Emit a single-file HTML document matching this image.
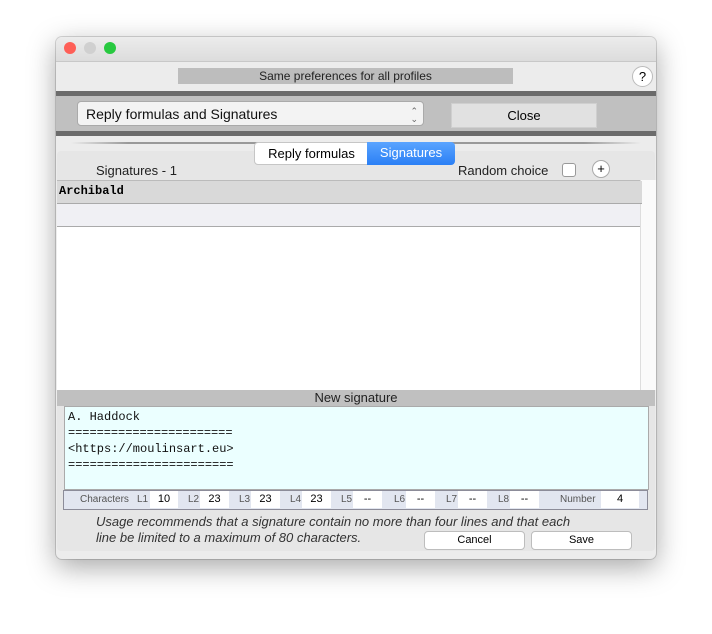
<!DOCTYPE html>
<html><head><style>
body{margin:0;width:712px;height:634px;background:#fff;font-family:"Liberation Sans",sans-serif;position:relative;overflow:hidden}
.a{position:absolute}
.win{left:56px;top:37px;width:600px;height:522px;background:#ececec;border-radius:6px;box-shadow:0 8px 28px rgba(0,0,0,.35),0 0 0 1px rgba(0,0,0,.15);overflow:hidden}
.tl{width:12px;height:12px;border-radius:50%;top:5px}
.mono{font-family:"Liberation Mono",monospace}
.inp{background:#fff;height:17px;font-size:11px;text-align:center;line-height:17px}
.lab{font-size:10px;color:#555}
.btn{background:#fff;border:1px solid #bdbdbd;border-radius:4px;font-size:11px;text-align:center;line-height:17px;height:17px}
</style></head><body>
<div class="a win">
 <div class="a" style="left:0;top:0;width:600px;height:24px;background:linear-gradient(#ececec,#dcdcdc);border-bottom:1px solid #c8c8c8"></div>
 <div class="a tl" style="left:8px;background:#fe5f57"></div>
 <div class="a tl" style="left:28px;background:#d0d0d0"></div>
 <div class="a tl" style="left:48px;background:#28c940"></div>
 <div class="a" style="left:122px;top:31px;width:335px;height:16px;background:#bdbdbd;font-size:12px;text-align:center;line-height:16px;color:#222">Same preferences for all profiles</div>
 <div class="a" style="left:576px;top:29px;width:19px;height:19px;border-radius:50%;background:#fff;border:1px solid #bbb;font-size:13px;text-align:center;line-height:19px">?</div>
 <div class="a" style="left:0;top:54px;width:600px;height:5px;background:#6b6b6b"></div>
 <div class="a" style="left:0;top:59px;width:600px;height:35px;background:#c0c0c0"></div>
 <div class="a" style="left:0;top:94px;width:600px;height:5px;background:#6b6b6b"></div>
 <div class="a" style="left:21px;top:64px;width:347px;height:25px;background:#f3f3f3;border-radius:4px;border:0.5px solid #aaa;font-size:14px;line-height:25px;padding-left:8px;box-sizing:border-box;color:#111">Reply formulas and Signatures<span class="a" style="right:5px;top:0;font-size:9px;color:#666;line-height:8px;padding-top:5px;text-align:center">⌃<br>⌄</span></div>
 <div class="a" style="left:395px;top:66px;width:144px;height:23px;background:#e1e1e1;border:1px solid #cfcfcf;font-size:13px;text-align:center;line-height:23px">Close</div>
 <div class="a" style="left:15px;top:105px;width:570px;height:2px;background:linear-gradient(90deg,transparent,#999 10%,#999 90%,transparent)"></div>
 <div class="a" style="left:1px;top:114px;width:598px;height:400px;background:#e6e6e6;border-radius:4px"></div>
 <div class="a" style="left:198px;top:105px;width:113px;height:21px;background:#fff;border:1px solid #c6c6c6;border-radius:4px 0 0 4px;font-size:13px;text-align:center;line-height:21px">Reply formulas</div>
 <div class="a" style="left:311px;top:105px;width:88px;height:23px;background:linear-gradient(#5aa4ff,#2a7ff5);border-radius:0 4px 4px 0;color:#fff;font-size:13px;text-align:center;line-height:22px">Signatures</div>
 <div class="a" style="left:40px;top:126px;font-size:13px;color:#222">Signatures - 1</div>
 <div class="a" style="left:402px;top:126px;font-size:13px;color:#222">Random choice</div>
 <div class="a" style="left:506px;top:126px;width:12px;height:12px;background:#fff;border:1px solid #999;border-radius:3px"></div>
 <div class="a" style="left:536px;top:123px;width:16px;height:16px;border-radius:50%;background:#fff;border:1px solid #aaa;font-size:13px;text-align:center;line-height:16px">+</div>
 <div class="a" style="left:1px;top:143px;width:583px;height:210px;background:#fff;border-top:1px solid #bbb"></div>
 <div class="a" style="left:584px;top:143px;width:15px;height:210px;background:#fafafa;border-left:1px solid #ddd"></div>
 <div class="a mono" style="left:1px;top:144px;width:583px;height:22px;background:#d9d9d9;font-size:12px;font-weight:bold;line-height:20px;padding-left:2px;border-bottom:1px solid #aaa">Archibald</div>
 <div class="a" style="left:1px;top:167px;width:583px;height:22px;background:#f0f0f4;border-bottom:1px solid #aaa"></div>
 <div class="a" style="left:1px;top:353px;width:598px;height:16px;background:#c0c0c0;font-size:13px;text-align:center;line-height:16px;color:#222">New signature</div>
 <div class="a mono" style="left:8px;top:369px;width:585px;height:84px;background:#ebffff;border:1px solid #aaa;box-sizing:border-box;font-size:12px;line-height:16px;padding:2px 0 0 3px;color:#111">A. Haddock<br><span style="font-size:12px;letter-spacing:-0.05px">=======================</span><br>&lt;https://moulinsart.eu&gt;<br><span>=======================</span></div>
 <div class="a" style="left:7px;top:453px;width:585px;height:20px;background:#e2e6f0;border:1px solid #8c8c99;box-sizing:border-box"></div>
 <div class="a lab" style="left:24px;top:457px">Characters</div>
 <div class="a lab" style="left:81px;top:457px">L1</div><div class="a inp" style="left:94px;top:454px;width:28px">10</div>
 <div class="a lab" style="left:132px;top:457px">L2</div><div class="a inp" style="left:144px;top:454px;width:29px">23</div>
 <div class="a lab" style="left:183px;top:457px">L3</div><div class="a inp" style="left:195px;top:454px;width:29px">23</div>
 <div class="a lab" style="left:234px;top:457px">L4</div><div class="a inp" style="left:246px;top:454px;width:29px">23</div>
 <div class="a lab" style="left:285px;top:457px">L5</div><div class="a inp" style="left:297px;top:454px;width:29px">--</div>
 <div class="a lab" style="left:338px;top:457px">L6</div><div class="a inp" style="left:350px;top:454px;width:29px">--</div>
 <div class="a lab" style="left:390px;top:457px">L7</div><div class="a inp" style="left:402px;top:454px;width:29px">--</div>
 <div class="a lab" style="left:442px;top:457px">L8</div><div class="a inp" style="left:454px;top:454px;width:29px">--</div>
 <div class="a lab" style="left:504px;top:457px">Number</div><div class="a inp" style="left:545px;top:454px;width:38px">4</div>
 <div class="a" style="left:40px;top:477px;font-size:13px;font-style:italic;color:#333;line-height:16px">Usage recommends that a signature contain no more than four lines and that each<br>line be limited to a maximum of 80 characters.</div>
 <div class="a btn" style="left:368px;top:494px;width:99px">Cancel</div>
 <div class="a btn" style="left:475px;top:494px;width:99px">Save</div>
</div>
</body></html>
